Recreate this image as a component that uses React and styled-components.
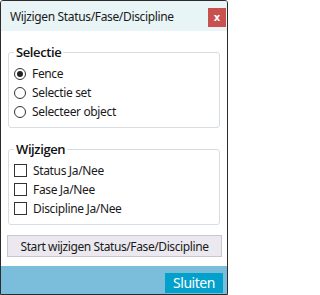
import React, { useState } from 'react';
import styled, { createGlobalStyle } from 'styled-components';

const GlobalStyle = createGlobalStyle`
  html, body {
    margin: 0;
    padding: 0;
    background: #ffffff;
  }
  body {
    font-family: "Noto Sans", "Open Sans", sans-serif;
    color: #1a1a1a;
  }
  * { box-sizing: border-box; }
`;

const Window = styled.div`
  width: 228px;
  height: 295px;
  display: flex;
  flex-direction: column;
  background: #ffffff;
  border: 1px solid #2b2b2b;
  border-radius: 3px 3px 0 0;
  overflow: hidden;
`;

const TitleBar = styled.div`
  height: 30px;
  flex: none;
  display: flex;
  align-items: flex-start;
  justify-content: space-between;
  padding: 0 1px 0 9px;
  background: #e8f4f6;
`;

const Title = styled.div`
  font-size: 12px;
  line-height: 14px;
  letter-spacing: -0.35px;
  margin-top: 9px;
  color: #1a1a1a;
  white-space: nowrap;
`;

const CloseButton = styled.button`
  width: 18px;
  height: 19px;
  margin-top: 7px;
  padding: 0;
  border: none;
  background: #c8504f;
  color: #ffffff;
  font-family: "DejaVu Sans", sans-serif;
  font-weight: 700;
  font-size: 10px;
  line-height: 18px;
  text-align: center;
`;

const Body = styled.div`
  flex: 1;
  display: flex;
  flex-direction: column;
  padding: 13px 5px 0 6px;
`;

const Group = styled.fieldset`
  margin: 0 2px ${p => p.$gap || 0}px 1px;
  padding: 0 5px 6px 5px;
  border: 1px solid #d6dee4;
  border-radius: 3px;
  min-width: 0;
`;

const Legend = styled.legend`
  padding: 0 2px;
  font-family: "Open Sans", "Noto Sans", sans-serif;
  font-size: 13px;
  font-weight: 600;
  letter-spacing: -0.4px;
  line-height: 16px;
  color: #111111;
`;

const Options = styled.div`
  display: flex;
  flex-direction: column;
  margin-top: 4px;
`;

const Option = styled.label`
  height: 19px;
  display: flex;
  align-items: center;
  gap: ${p => p.$gap}px;
  font-size: 12px;
  letter-spacing: -0.35px;
  color: #1a1a1a;
  cursor: default;
`;

const RadioMark = styled.span`
  width: 12px;
  height: 12px;
  flex: none;
  border: 1px solid #333333;
  border-radius: 50%;
  background: #ffffff;
  display: flex;
  align-items: center;
  justify-content: center;

  &::after {
    content: '';
    width: 6px;
    height: 6px;
    border-radius: 50%;
    background: ${p => (p.$on ? '#222222' : 'transparent')};
  }
`;

const CheckMark = styled.span`
  width: 13px;
  height: 13px;
  flex: none;
  border: 1px solid #333333;
  background: #ffffff;
  font-size: 10px;
  line-height: 11px;
  text-align: center;
`;

const ActionButton = styled.button`
  height: 22px;
  margin-top: 10px;
  padding: 0;
  border: 1px solid #c8c6d1;
  background: #ebe9ef;
  font-family: inherit;
  font-size: 12px;
  letter-spacing: -0.4px;
  color: #1a1a1a;
`;

const Footer = styled.div`
  height: 28px;
  flex: none;
  display: flex;
  justify-content: flex-end;
  align-items: flex-start;
  padding: 7px 4px 0 0;
  background: #7abedb;
`;

const CloseAction = styled.button`
  width: 58px;
  height: 20px;
  padding: 0;
  border: none;
  background: #02a0cb;
  color: #ffffff;
  font-family: inherit;
  font-size: 14px;
  letter-spacing: -0.45px;
  line-height: 20px;
`;

const selecties = [
  { id: 'fence', label: 'Fence' },
  { id: 'set', label: 'Selectie set' },
  { id: 'object', label: 'Selecteer object' },
];

const wijzigingen = [
  { id: 'status', label: 'Status Ja/Nee' },
  { id: 'fase', label: 'Fase Ja/Nee' },
  { id: 'discipline', label: 'Discipline Ja/Nee' },
];

const App = () => {
  const [selectie, setSelectie] = useState('fence');
  const [checks, setChecks] = useState({});

  const toggle = (id) => {
    setChecks({ ...checks, [id]: !checks[id] });
  };

  return (
    <>
      <GlobalStyle />
      <Window>
        <TitleBar>
          <Title>Wijzigen Status/Fase/Discipline</Title>
          <CloseButton>x</CloseButton>
        </TitleBar>

        <Body>
          <Group $gap={13}>
            <Legend>Selectie</Legend>
            <Options>
              {selecties.map((s) => (
                <Option key={s.id} $gap={6} onClick={() => setSelectie(s.id)}>
                  <RadioMark $on={selectie === s.id} />
                  {s.label}
                </Option>
              ))}
            </Options>
          </Group>

          <Group>
            <Legend>Wijzigen</Legend>
            <Options>
              {wijzigingen.map((w) => (
                <Option key={w.id} $gap={6} onClick={() => toggle(w.id)}>
                  <CheckMark>{checks[w.id] ? '✓' : ''}</CheckMark>
                  {w.label}
                </Option>
              ))}
            </Options>
          </Group>

          <ActionButton>Start wijzigen Status/Fase/Discipline</ActionButton>
        </Body>

        <Footer>
          <CloseAction>Sluiten</CloseAction>
        </Footer>
      </Window>
    </>
  );
};

export default App;
